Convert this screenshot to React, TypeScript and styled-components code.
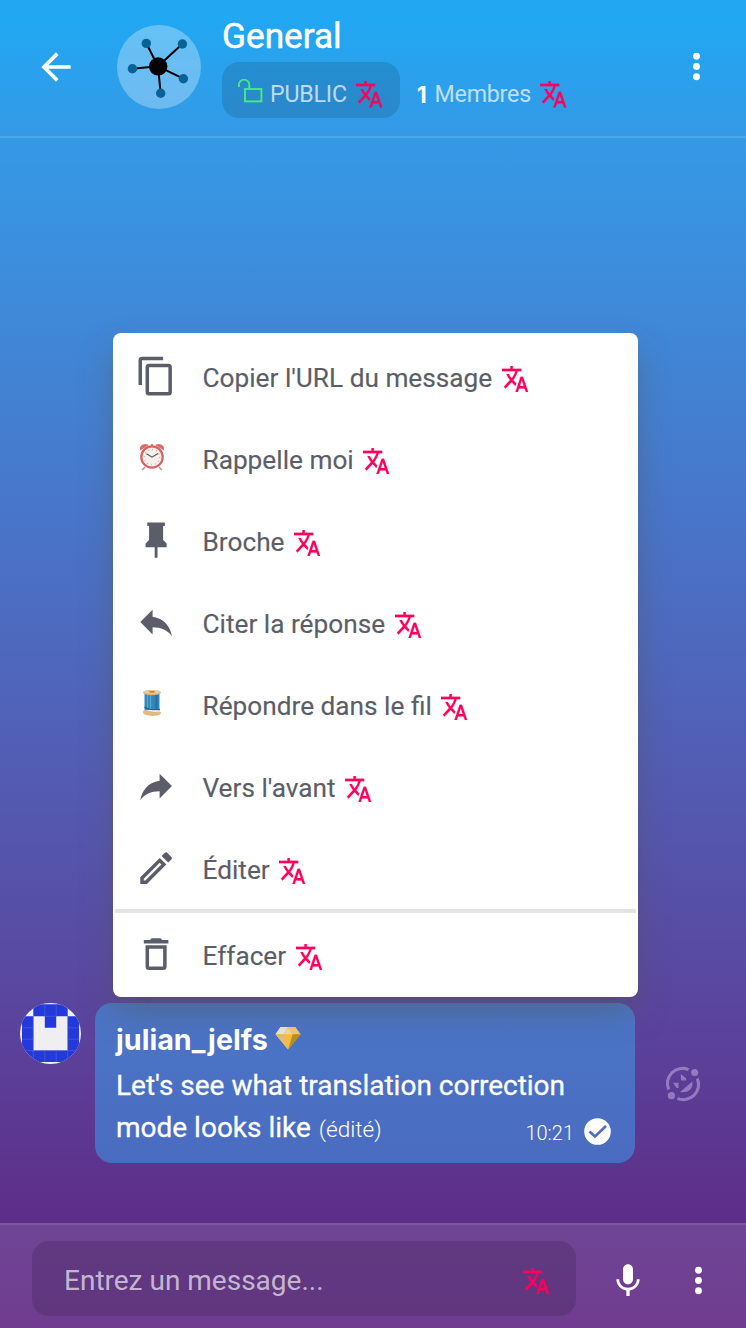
import React from 'react';
import styled, { createGlobalStyle } from 'styled-components';

const GlobalStyle = createGlobalStyle`
  * { box-sizing: border-box; }
  body { margin: 0; font-family: Roboto, "Liberation Sans", sans-serif; }
  svg { display: block; flex: none; }
`;

const Page = styled.div`
  position: relative;
  display: flex;
  flex-direction: column;
  width: 746px;
  height: 1328px;
  overflow: hidden;
  color: #fff;
  background: linear-gradient(#22a7f2 0, #22a7f2 20px, #3599e6 140px, #4088d8 320px, #4c6dc2 600px, #5459b0 800px, #5a469f 1000px, #5d308a 1200px, #5f2583 1328px);
`;

const Header = styled.header`
  display: flex;
  height: 138px;
  padding: 0 29px 0 34px;
  border-bottom: 2px solid rgba(255, 255, 255, 0.13);
`;

const IconButton = styled.div<{ $size: number; $top?: number }>`
  width: ${(p) => p.$size}px;
  height: ${(p) => p.$size}px;
  margin-top: ${(p) => p.$top ?? 0}px;
`;

const OptionsButton = styled(IconButton)`
  margin-left: auto;
`;

const GroupAvatar = styled.div`
  width: 84px;
  height: 84px;
  margin: 25px 21px 0 39px;
  border-radius: 50%;
  background: rgba(255, 255, 255, 0.3);
`;

const GroupInfo = styled.div`
  flex: 1;
  padding-top: 14px;
`;

const GroupName = styled.h1`
  margin: 0 0 4px;
  font-size: 35.2px;
  line-height: 44px;
  font-weight: 400;
  -webkit-text-stroke: 0.5px #fff;
`;

const Meta = styled.div`
  display: flex;
  align-items: center;
  font-size: 23.2px;
  letter-spacing: -0.2px;
  color: rgba(255, 255, 255, 0.7);
`;

const Visibility = styled.div`
  display: flex;
  align-items: center;
  width: 178px;
  height: 56px;
  padding: 8px 0 0 16px;
  border-radius: 17px;
  background: rgba(0, 0, 0, 0.12);
`;

const Members = styled.div`
  display: flex;
  align-items: center;
  padding: 8px 0 0 17px;

  b {
    margin-right: 8px;
    color: #fff;
    font-family: Inter, sans-serif;
    font-weight: 700;
    font-size: 22.5px;
  }
`;

const Messages = styled.main`
  flex: 1;
  display: flex;
  align-items: flex-end;
  padding: 0 0 60px 20px;
`;

const UserAvatar = styled.div`
  width: 61px;
  height: 61px;
  margin: 0 14px 99px 0;
  overflow: hidden;
  border-radius: 50%;
  background: #efeff1;
`;

const Bubble = styled.article`
  width: 540px;
  height: 160px;
  padding: 16px 24px 0 21px;
  border-radius: 17px;
  background: linear-gradient(#4a75c7, #4a6cc0);
`;

const Sender = styled.div`
  display: flex;
  align-items: center;
  gap: 7px;
  height: 40px;
  font: 700 28.7px Inter, sans-serif;

  svg { margin-top: -2px; }
`;

const Body = styled.div`
  margin-top: 6px;
  font-size: 28px;
  line-height: 42px;
  -webkit-text-stroke: 0.3px #fff;
`;

const LastLine = styled.div`
  display: flex;
  white-space: pre;
`;

const Edited = styled.span`
  padding: 2px 0 0 1px;
  font-size: 22.6px;
  font-weight: 300;
  -webkit-text-stroke: 0;
`;

const Status = styled.span`
  display: flex;
  gap: 10px;
  margin-left: auto;
  font-size: 20px;
  font-weight: 300;
  -webkit-text-stroke: 0;
  line-height: 53px;

  svg { margin-top: 11px; }
`;

const ReactionButton = styled.div`
  margin: 0 0 61px 30px;
`;

const Footer = styled.footer`
  display: flex;
  height: 105px;
  padding: 16px 27px 0 32px;
  border-top: 2px solid rgba(255, 255, 255, 0.1);
  background: rgba(255, 255, 255, 0.11);
`;

const Entry = styled.div`
  display: flex;
  align-items: center;
  justify-content: space-between;
  width: 544px;
  height: 75px;
  margin-right: 31.5px;
  padding: 4px 27px 0 32px;
  border-radius: 17px;
  background: rgba(70, 40, 95, 0.35);
  color: rgba(255, 255, 255, 0.65);
  font-size: 28px;

  svg { margin-top: 1px; }
`;

const Menu = styled.nav`
  position: absolute;
  left: 113px;
  top: 333px;
  width: 525px;
  height: 664px;
  padding-top: 4px;
  border-radius: 8px;
  background: #fff;
  box-shadow: 0 16px 32px -4px rgba(85, 85, 70, 0.5);
`;

const MenuItem = styled.div`
  display: flex;
  align-items: center;
  height: 82px;
  padding: 0 0 1px 22px;
  color: #5b5e68;
  font-size: 26.22px;
  -webkit-text-stroke: 0.15px #5b5e68;
`;

const MenuIcon = styled.div`
  width: 42.2px;
  margin: -3px 25.3px 0 0;
`;

const EmojiBox = styled.div`
  padding-left: 1.6px;
`;

const Separator = styled.hr`
  height: 4px;
  margin: -2px 2px 2px;
  border: 0;
  background: #e4e4e4;
`;

const TranslateSvg = styled.svg<{ $gap: number; $top: number }>`
  margin: ${(p) => p.$top}px 0 0 ${(p) => p.$gap}px;
`;

const Translate = ({ gap = 9.6, top = 3 }: { gap?: number; top?: number }) => (
  <TranslateSvg $gap={gap} $top={top} width="26.4" height="26.6" viewBox="1 2 22 20" preserveAspectRatio="none" fill="#ff005c" stroke="#ff005c" strokeWidth=".15">
    <path d="M12.87,15.07L10.33,12.56L10.36,12.53C12.1,10.59 13.34,8.36 14.07,6H17V4H10V2H8V4H1V6H12.17C11.5,7.92 10.44,9.75 9,11.35C8.07,10.32 7.3,9.19 6.69,8H4.69C5.42,9.63 6.42,11.17 7.67,12.56L2.58,17.58L4,19L9,14L12.11,17.11L12.87,15.07M18.5,10H16.5L12,22H14L15.12,19H19.87L21,22H23L18.5,10M15.88,17L17.5,12.67L19.12,17H15.88Z" />
  </TranslateSvg>
);

const Glyph = ({ d, size = 42.2 }: { d: string; size?: number }) => (
  <svg width={size} height={size} viewBox="0 0 24 24" fill="currentColor">
    <path d={d} />
  </svg>
);

const paths = {
  back: 'M20 11H7.83l5.59-5.59L12 4l-8 8 8 8 1.41-1.41L7.83 13H20v-2z',
  dots: 'M12 8a2 2 0 1 0 0-4 2 2 0 0 0 0 4zm0 2a2 2 0 1 0 0 4 2 2 0 0 0 0-4zm0 6a2 2 0 1 0 0 4 2 2 0 0 0 0-4z',
  mic: 'M12 14c1.66 0 2.99-1.34 2.99-3L15 5c0-1.66-1.34-3-3-3S9 3.34 9 5v6c0 1.66 1.34 3 3 3zm5.3-3c0 3-2.54 5.1-5.3 5.1S6.7 14 6.7 11H5c0 3.41 2.72 6.23 6 6.72V21h2v-3.28c3.28-.48 6-3.3 6-6.72h-1.7z',
  copy: 'M19,21H8V7H19M19,5H8A2,2 0 0,0 6,7V21A2,2 0 0,0 8,23H19A2,2 0 0,0 21,21V7A2,2 0 0,0 19,5M16,1H4A2,2 0 0,0 2,3V17H4V3H16V1Z',
  pin: 'M16,12V4H17V2H7V4H8V12L6,14V16H11.2V22H12.8V16H18V14L16,12Z',
  reply: 'M10,9V5L3,12L10,19V14.9C15,14.9 18.5,16.5 21,20C20,15 17,10 10,9Z',
  forward: 'M14,9V5L21,12L14,19V14.9C9,14.9 5.5,16.5 3,20C4,15 7,10 14,9Z',
  edit: 'M14.06,9L15,9.94L5.92,19H5V18.08L14.06,9M17.66,3C17.41,3 17.15,3.1 16.96,3.29L15.13,5.12L18.88,8.87L20.71,7.04C21.1,6.65 21.1,6 20.71,5.63L18.37,3.29C18.17,3.09 17.92,3 17.66,3M14.06,6.19L3,17.25V21H6.75L17.81,9.94L14.06,6.19Z',
  trash: 'M6,19A2,2 0 0,0 8,21H16A2,2 0 0,0 18,19V7H6V19M8,9H16V19H8V9M15.5,4L14.5,3H9.5L8.5,4H5V6H19V4H15.5Z',
};

const Network = () => (
  <svg width="84" height="84" viewBox="117 25 84 84">
    <path d="M158 66.3L146.3 43.3M158 66.3L182.3 44M158 66.3L132.3 68.7M158 66.3L183.3 78.7M158 66.3L160.7 93.3" stroke="#000" strokeWidth="2" />
    <g fill="#086296">
      <circle cx="146.3" cy="43.4" r="4.7" />
      <circle cx="182.4" cy="44" r="4.7" />
      <circle cx="132.4" cy="68.8" r="4.7" />
      <circle cx="183.4" cy="78.7" r="4.7" />
      <circle cx="160.7" cy="93.3" r="4.7" />
    </g>
    <circle cx="158.2" cy="66.4" r="9.2" />
  </svg>
);

const LockSvg = styled.svg`
  margin: -8px 6px 0 0;
`;

const Lock = () => (
  <LockSvg width="26" height="26" viewBox="0 0 26 26" fill="none" stroke="#47ec7c" strokeWidth="1.9">
    <rect x="7" y="12" width="16.4" height="12.4" />
    <path d="M.9 10V7.8a5.2 5.2 0 0 1 10.4 0V12" />
  </LockSvg>
);

const Clock = () => (
  <svg width="34" height="34" viewBox="0 0 34 34">
    <path d="M8 26l-3 3M22 26l3 3" stroke="#a9a3a3" strokeWidth="1.6" />
    <path d="M3.2 9.4C1.500 5 7 1.300 11.800 4zM26.800 9.400C28.500 5 23 1.300 18.200 4z" fill="#dc6a6a" />
    <path d="M15 3v3" stroke="#b98a8a" strokeWidth="2" />
    <circle cx="15" cy="16" r="10.7" fill="#f4f0ee" stroke="#d9615f" strokeWidth="2.2" />
    <circle cx="15" cy="16" r="7.6" fill="none" stroke="#dda9a5" strokeWidth="1.5" strokeDasharray=".9 3.08" />
    <path d="M9.5 12.8L15 16.2L21 12.5" fill="none" stroke="#5c5654" strokeWidth="1.1" />
  </svg>
);

const Spool = () => (
  <svg width="34" height="34" viewBox="0 0 34 34">
    <path d="M7.5 7h15v16h-15z" fill="#3586b8" />
    <path d="M10.5 7v15M13.5 7v15" stroke="#5aa9d3" strokeWidth="1.2" />
    <path d="M19.5 8v14" stroke="#246f9f" strokeWidth="2" />
    <path d="M7.5 20c4 3 9 3 15.5 2.5" stroke="#246690" strokeWidth="1.3" fill="none" />
    <ellipse cx="15" cy="5.6" rx="9" ry="2.7" fill="#d9ad75" />
    <ellipse cx="15" cy="4.9" rx="8.6" ry="2" fill="#ecc996" />
    <ellipse cx="15" cy="4.9" rx="3" ry=".8" fill="#a98355" />
    <path d="M6 25c0-2 3-2.5 4-2 3 1.6 7 2 11 1.5 2-.3 3 .2 3 1.5 0 4-18 4-18-1z" fill="#e2b981" />
  </svg>
);

const Diamond = () => (
  <svg width="26" height="23" viewBox="0 0 26 23">
    <path d="M5.5 0h14.7L25.5 7.3 13 22.5 .5 7.3z" fill="#f4bd46" />
    <path d="M5.5 0L.5 7.3h7.7L12.8 0z" fill="#ede8df" />
    <path d="M12.8 0L8.2 7.3h9.6z" fill="#f6d795" />
    <path d="M12.8 0l5 7.3h7.7L20.2 0z" fill="#f2ca75" />
    <path d="M.5 7.3h7.7L13 22.5z" fill="#e9bd69" />
    <path d="M17.8 7.3h7.7L13 22.5z" fill="#c18a20" />
  </svg>
);

const Identicon = () => (
  <svg width="61" height="61" viewBox="0 0 61 61">
    <path d="M13.3 1.3h34.4v12h11.4v45.7H2V13.3h11.3zM13.3 13.3v34.3h34.4V13.3H36.2v11.5H24.8V13.3z" fill="#2439da" fillRule="evenodd" />
    <path d="M24.8 1.8v11.5M36.2 1.8v11.5M24.8 13.3h11.4M2 24.8h11.3M2 36.2h11.3M2 47.6h57M47.7 24.8h11.4M47.7 36.2h11.4M13.3 13.3V59M24.8 47.6V59M36.2 47.6V59M47.7 13.3V59" fill="none" stroke="#5064df" strokeWidth=".6" />
  </svg>
);

const ReactionIcon = () => (
  <svg width="36" height="36" viewBox="0 0 36 36" opacity=".6" fill="#b9a4da" stroke="none">
    <path d="M3.7 23.5A15 15 0 0 1 23.5 3.7M32.3 12.5A15 15 0 0 1 12.5 32.3" fill="none" stroke="#b9a4da" strokeWidth="3.1" />
    <circle cx="29.7" cy="6.5" r="3.6" />
    <circle cx="6.4" cy="29.7" r="3.6" />
    <path d="M15.8 8l5.2 4.200v2.300h-4.500l-.7-1.500zM8 16.800h5.500v5.200h-2zM27.300 15.500c1.500 7-4 12-12.300 10.500z" />
  </svg>
);

const Check = () => (
  <svg width="27" height="27" viewBox="0 0 27 27">
    <circle cx="13.5" cy="13.5" r="13.3" fill="#fff" />
    <path d="M5.5 13.5l5.5 5L22 8" fill="none" stroke="#4a6ec2" strokeWidth="2.7" />
  </svg>
);

const items = [
  { label: "Copier l'URL du message", icon: <Glyph d={paths.copy} /> },
  { label: 'Rappelle moi', icon: <EmojiBox><Clock /></EmojiBox> },
  { label: 'Broche', icon: <Glyph d={paths.pin} /> },
  { label: 'Citer la réponse', icon: <Glyph d={paths.reply} /> },
  { label: 'Répondre dans le fil', icon: <EmojiBox><Spool /></EmojiBox> },
  { label: "Vers l'avant", icon: <Glyph d={paths.forward} /> },
  { label: 'Éditer', icon: <Glyph d={paths.edit} /> },
];

export default function App() {
  return (
    <Page>
      <GlobalStyle />
      <Header>
        <IconButton $size={44} $top={45}><Glyph d={paths.back} size={44} /></IconButton>
        <GroupAvatar><Network /></GroupAvatar>
        <GroupInfo>
          <GroupName>General</GroupName>
          <Meta>
            <Visibility><Lock />PUBLIC<Translate gap={9} top={1} /></Visibility>
            <Members><b>1</b>Membres<Translate gap={9.5} top={1} /></Members>
          </Meta>
        </GroupInfo>
        <IconButton $size={41} $top={46}><Glyph d={paths.dots} size={41} /></IconButton>
      </Header>
      <Messages>
        <UserAvatar><Identicon /></UserAvatar>
        <Bubble>
          <Sender>julian_jelfs<Diamond /></Sender>
          <Body>
            Let's see what translation correction
            <LastLine>
              mode looks like <Edited>(édité)</Edited>
              <Status>10:21<Check /></Status>
            </LastLine>
          </Body>
        </Bubble>
        <ReactionButton><ReactionIcon /></ReactionButton>
      </Messages>
      <Footer>
        <Entry>Entrez un message...<Translate /></Entry>
        <IconButton $size={40} $top={19.5}><Glyph d={paths.mic} size={40} /></IconButton>
        <OptionsButton $size={41} $top={19}><Glyph d={paths.dots} size={41} /></OptionsButton>
      </Footer>
      <Menu>
        {items.map((item) => (
          <MenuItem key={item.label}>
            <MenuIcon>{item.icon}</MenuIcon>
            {item.label}
            <Translate />
          </MenuItem>
        ))}
        <Separator />
        <MenuItem>
          <MenuIcon><Glyph d={paths.trash} /></MenuIcon>
          Effacer
          <Translate />
        </MenuItem>
      </Menu>
    </Page>
  );
}
